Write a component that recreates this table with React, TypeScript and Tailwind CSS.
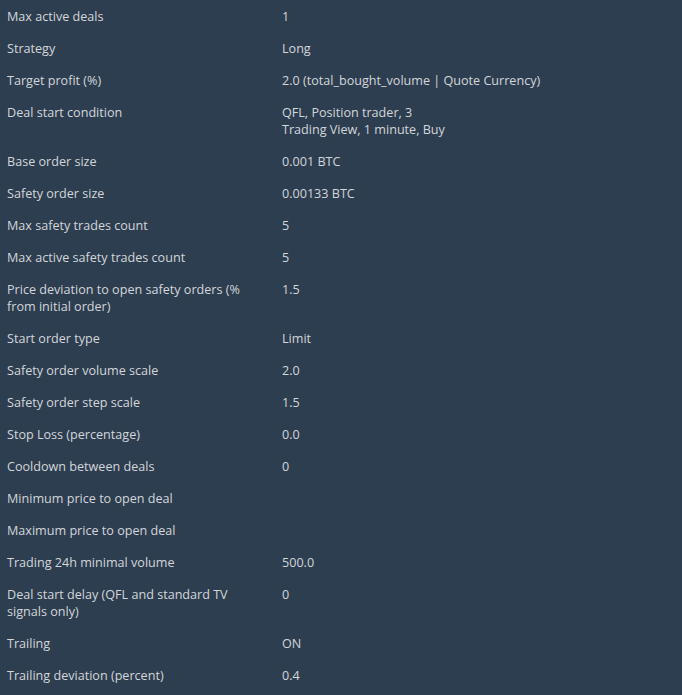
const rows: [string, string[]][] = [
  ["Max active deals", ["1"]],
  ["Strategy", ["Long"]],
  ["Target profit (%)", ["2.0 (total_bought_volume | Quote Currency)"]],
  ["Deal start condition", ["QFL, Position trader, 3", "Trading View, 1 minute, Buy"]],
  ["Base order size", ["0.001 BTC"]],
  ["Safety order size", ["0.00133 BTC"]],
  ["Max safety trades count", ["5"]],
  ["Max active safety trades count", ["5"]],
  ["Price deviation to open safety orders (% from initial order)", ["1.5"]],
  ["Start order type", ["Limit"]],
  ["Safety order volume scale", ["2.0"]],
  ["Safety order step scale", ["1.5"]],
  ["Stop Loss (percentage)", ["0.0"]],
  ["Cooldown between deals", ["0"]],
  ["Minimum price to open deal", []],
  ["Maximum price to open deal", []],
  ["Trading 24h minimal volume", ["500.0"]],
  ["Deal start delay (QFL and standard TV signals only)", ["0"]],
  ["Trailing", ["ON"]],
  ["Trailing deviation (percent)", ["0.4"]],
];

const App = () => {
  return (
    <div
      className="w-[682px] h-[695px] overflow-hidden bg-[#2d3e50] text-[#d3d6da] text-[12.6px] leading-[17px]"
      style={{ fontFamily: '"Open Sans", "Liberation Sans", sans-serif' }}
    >
      <div className="flex flex-col">
        {rows.map(([label, values]) => (
          <div key={label} className="flex pt-[8px] pb-[7px]">
            <div className="w-[282px] shrink-0 pl-[7px] pr-[26px]">{label}</div>
            <div className="flex flex-col">
              {values.length === 0 ? (
                <span>&nbsp;</span>
              ) : (
                values.map((v) => <span key={v}>{v}</span>)
              )}
            </div>
          </div>
        ))}
      </div>
    </div>
  );
};

export default App;
